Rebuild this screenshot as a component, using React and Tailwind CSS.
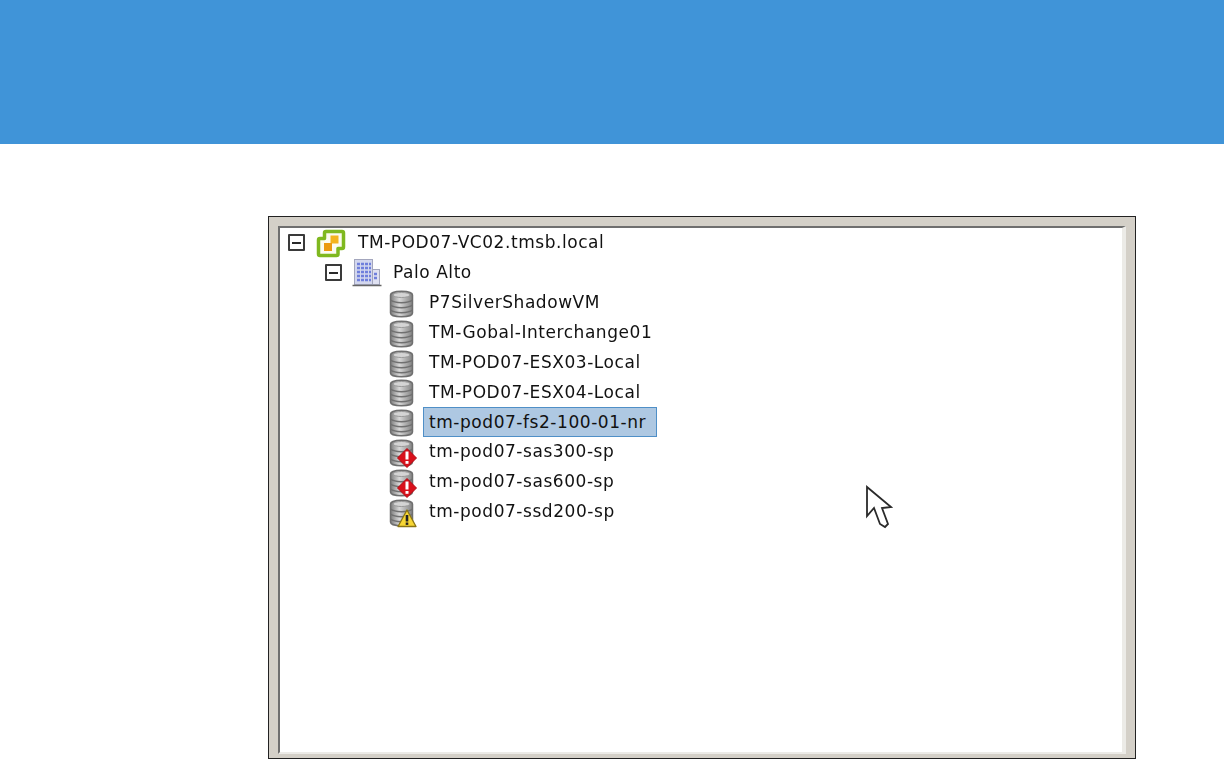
import React from 'react';

const font = { fontFamily: '"DejaVu Sans", sans-serif' };

function Expander() {
  return (
    <span className="flex h-[17px] w-[17px] shrink-0 items-center justify-center rounded-[1px] border-2 border-[#3a3a3a] bg-white">
      <span className="h-[2px] w-[9px] bg-[#2a2a2a]"></span>
    </span>
  );
}

function VCenterIcon() {
  return (
    <svg width="30" height="30" viewBox="0 0 30 30" className="shrink-0">
      <path d="M10 3.500H26a1.500 1.500 0 0 1 1.500 1.500V19a1.500 1.500 0 0 1-1.500 1.500H22V26a1.500 1.500 0 0 1-1.500 1.500H4A1.500 1.500 0 0 1 2.500 26V12A1.500 1.500 0 0 1 4 10.500H8.500V5A1.500 1.500 0 0 1 10 3.500z" fill="#fbfbf0" stroke="#7fb81f" strokeWidth="3.500" strokeLinejoin="round" />
      <rect x="14.500" y="7.500" width="8" height="8" fill="#f4b41c" />
      <rect x="8" y="15" width="8" height="8" fill="#eb9a10" />
    </svg>
  );
}

function BuildingIcon() {
  return (
    <svg width="30" height="30" viewBox="0 0 30 30" className="shrink-0">
      <rect x="2.500" y="1.500" width="18" height="25" fill="#d3d7ee" stroke="#a3a6bd" />
      <rect x="20.500" y="11.500" width="7" height="15" fill="#dfe1f2" stroke="#a3a6bd" />
      <path d="M5 6h14M5 10h14M5 14h14M5 18h14M5 22h14M22 16h4M22 20h4" stroke="#6f7fdc" strokeWidth="2.500" strokeDasharray="3 1" />
      <path d="M0.500 27.500h29" stroke="#666" strokeWidth="1.500" />
    </svg>
  );
}

function DatastoreIcon({ badge }) {
  return (
    <svg width="30" height="32" viewBox="0 0 30 32" className="shrink-0">
      <defs>
        <linearGradient id="disk" x1="0" x2="1" y1="0" y2="0">
          <stop offset="0" stopColor="#7c7c7c" />
          <stop offset="0.4" stopColor="#d8d8d8" />
          <stop offset="1" stopColor="#828282" />
        </linearGradient>
      </defs>
      <path d="M2.500 8c0-5 22-5 22 0v18c0 5-22 5-22 0z" fill="url(#disk)" stroke="#6f6f6f" strokeWidth="1.500" />
      <ellipse cx="13.500" cy="8" rx="8.500" ry="2.500" fill="#d4d4d4" stroke="#999" />
      <path d="M2.500 13c4 3.500 18 3.500 22 0M2.500 18c4 3.500 18 3.500 22 0M2.500 23c4 3.500 18 3.500 22 0" fill="none" stroke="#707070" strokeWidth="1.500" />
      {badge === 'error' && (
        <g>
          <path d="M19 12.500l9.500 9.500-9.500 9.500L9.500 22z" fill="#d8111b" stroke="#b00812" strokeLinejoin="round" />
          <rect x="17.500" y="15.500" width="3" height="8" fill="#fff" />
          <rect x="17.500" y="25" width="3" height="2.800" fill="#fff" />
        </g>
      )}
      {badge === 'warning' && (
        <g>
          <path d="M19 14l9 16.500H10z" fill="#f7d634" stroke="#8a7414" strokeWidth="1.300" strokeLinejoin="round" />
          <rect x="17.700" y="19" width="2.600" height="6.500" fill="#222" />
          <rect x="17.700" y="26.500" width="2.600" height="2.400" fill="#222" />
        </g>
      )}
    </svg>
  );
}

function Label({ children, selected, className }) {
  return (
    <span
      className={
        selected
          ? 'ml-[5px] flex h-[30px] items-center border border-[#4f8fc7] bg-[#aec8e2] pl-[5px] pr-[10px] text-[17px] tracking-[0.55px] text-[#111]'
          : `${className} text-[17px] tracking-[0.55px] text-[#111]`
      }
    >
      {children}
    </span>
  );
}

const stores = [
  { name: 'P7SilverShadowVM' },
  { name: 'TM-Gobal-Interchange01' },
  { name: 'TM-POD07-ESX03-Local' },
  { name: 'TM-POD07-ESX04-Local' },
  { name: 'tm-pod07-fs2-100-01-nr', selected: true },
  { name: 'tm-pod07-sas300-sp', badge: 'error' },
  { name: 'tm-pod07-sas600-sp', badge: 'error' },
  { name: 'tm-pod07-ssd200-sp', badge: 'warning' },
];

export default function App() {
  return (
    <div className="h-[759px] w-[1224px] overflow-hidden bg-white" style={font}>
      <div className="h-[144px] bg-[#4094d8]"></div>
      <div className="ml-[268px] mt-[72px] h-[543px] w-[868px] border border-[#222] bg-[#d4d0c8] pb-[4px] pl-[9px] pr-[9px] pt-[9px]">
        <div className="relative h-full border-b-2 border-l-2 border-r-4 border-t-2 border-b-[#ecebe7] border-l-[#6f6f6f] border-r-[#ecebe7] border-t-[#6f6f6f] bg-white pl-[8px]">
          <div className="blur-[0.5px]">
            <div className="flex h-[29.900px] items-center">
              <Expander />
              <span className="ml-[11px] flex"><VCenterIcon /></span>
              <Label className="ml-[12px]">TM-POD07-VC02.tmsb.local</Label>
            </div>
            <div className="flex h-[29.900px] items-center pl-[37px]">
              <Expander />
              <span className="ml-[10px] flex"><BuildingIcon /></span>
              <Label className="ml-[11px]">Palo Alto</Label>
            </div>
            {stores.map((s) => (
              <div key={s.name} className="flex h-[29.900px] items-center pl-[100px]">
                <DatastoreIcon badge={s.badge} />
                <Label selected={s.selected} className="ml-[11px]">{s.name}</Label>
              </div>
            ))}
          </div>
          <svg width="27" height="45" viewBox="0 0 27 45" className="absolute left-[586px] top-[257px] blur-[0.3px]">
            <path d="M1 2V31L8 23L14 39L19 42L22 39L16 23L25 22Z" fill="#fff" stroke="#2a2a2a" strokeWidth="1.800" />
          </svg>
        </div>
      </div>
    </div>
  );
}
